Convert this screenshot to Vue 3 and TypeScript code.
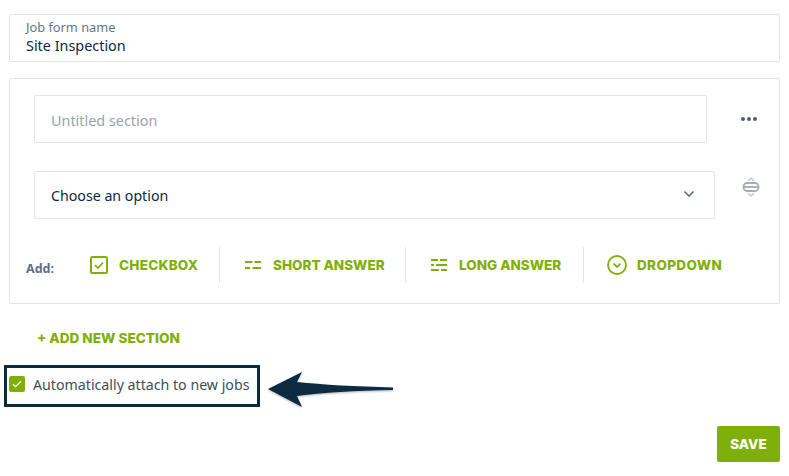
<template>
  <div class="page">
    <div class="name-box">
      <label class="name-label">Job form name</label>
      <div class="name-value">Site Inspection</div>
    </div>

    <section class="section-box">
      <div class="title-row">
        <div class="field title-field"><span>Untitled section</span></div>
        <span class="dots"><i></i><i></i><i></i></span>
      </div>

      <div class="select-row">
        <div class="field select-field">
          <span>Choose an option</span>
          <svg class="chevron" width="12" height="8" viewBox="0 0 12 8">
            <path d="M1.5 1.5 6 6l4.5-4.5" fill="none" stroke="#5d7183" stroke-width="1.6" />
          </svg>
        </div>
        <svg class="reorder" width="18" height="20" viewBox="0 0 18 20">
          <path d="M6 4 9 1l3 3M6 16l3 3 3-3" fill="none" stroke="#c3cad0" stroke-width="1.5" />
          <rect x="1.5" y="6" width="15" height="8" rx="3.5" fill="none" stroke="#a4adb5" stroke-width="1.8" />
          <path d="M2 10h14" fill="none" stroke="#a4adb5" stroke-width="1.8" />
        </svg>
      </div>

      <div class="add-row">
        <span class="add-label">Add:</span>
        <div v-for="item in addItems" :key="item.label" class="add-item" :class="item.cls">
          <svg v-if="item.icon === 'check'" width="18" height="18" viewBox="0 0 18 18">
            <rect x="1" y="1" width="16" height="16" rx="1.5" fill="none" stroke="#7fb00a" stroke-width="2" />
            <path d="M5 9.2 7.9 12 13 6.6" fill="none" stroke="#7fb00a" stroke-width="1.6" />
          </svg>
          <svg v-else-if="item.icon === 'short'" width="16" height="8" viewBox="0 0 16 8">
            <path d="M0 1h7.5M9.5 1H16M0 7h5M7.5 7H16" fill="none" stroke="#7fb00a" stroke-width="2" />
          </svg>
          <svg v-else-if="item.icon === 'long'" width="16" height="12" viewBox="0 0 16 12">
            <path d="M0 1h7M9 1h7M0 6h3M5 6h11M0 11h8M10 11h6" fill="none" stroke="#7fb00a" stroke-width="2" />
          </svg>
          <svg v-else width="20" height="20" viewBox="0 0 20 20">
            <circle cx="10" cy="10" r="9" fill="none" stroke="#7fb00a" stroke-width="1.8" />
            <path d="M6.6 8.6 10 12l3.4-3.4" fill="none" stroke="#7fb00a" stroke-width="1.8" />
          </svg>
          <span>{{ item.label }}</span>
        </div>
      </div>
    </section>

    <div class="add-section">+ ADD NEW SECTION</div>

    <div class="attach-row">
      <div class="attach-box">
        <span class="tick">
          <svg width="10" height="8" viewBox="0 0 10 8">
            <path d="M1 4.2 3.6 6.6 9 1.2" fill="none" stroke="#fff" stroke-width="1.2" />
          </svg>
        </span>
        <span class="attach-text">Automatically attach to new jobs</span>
      </div>
      <svg class="arrow" width="130" height="46" viewBox="0 0 130 46">
        <defs>
          <filter id="arrow-shadow" x="-10%" y="-20%" width="120%" height="150%">
            <feDropShadow dx="0" dy="1" stdDeviation="1.2" flood-color="#000" flood-opacity="0.3" />
          </filter>
        </defs>
        <path
          d="M3 23 37 6 32 16Q70 20 128 21.5L128 24Q70 25 32 30L37 41Z"
          fill="#0a2a3f"
          filter="url(#arrow-shadow)"
        />
      </svg>
    </div>

    <div class="footer">
      <button class="save" type="button">SAVE</button>
    </div>
  </div>
</template>

<script setup lang="ts">
interface AddItem {
  label: string;
  icon: string;
  cls: string;
}

const addItems: AddItem[] = [
  { label: "CHECKBOX", icon: "check", cls: "item-check" },
  { label: "SHORT ANSWER", icon: "short", cls: "item-short" },
  { label: "LONG ANSWER", icon: "long", cls: "item-long" },
  { label: "DROPDOWN", icon: "drop", cls: "item-drop" },
];
</script>

<style>
html,
body {
  margin: 0;
  background: #fff;
}
</style>

<style scoped>
.page {
  width: 789px;
  height: 476px;
  box-sizing: border-box;
  padding: 14px 9px 0;
  font-family: "Noto Sans", "Open Sans", sans-serif;
  color: #0a2a3f;
  overflow: hidden;
}

.name-box {
  height: 48px;
  box-sizing: border-box;
  border: 1px solid #e3e5e7;
  border-radius: 2px;
  padding: 3px 16px;
}

.name-label {
  display: block;
  font-size: 12.8px;
  line-height: 19px;
  color: #64748a;
}

.name-value {
  font-size: 14.4px;
  line-height: 18px;
}

.section-box {
  margin-top: 16px;
  height: 226px;
  box-sizing: border-box;
  border: 1px solid #e3e5e7;
  border-radius: 2px;
  padding: 16px 0 0 24px;
}

.field {
  height: 48px;
  box-sizing: border-box;
  border: 1px solid #e3e5e7;
  border-radius: 2px;
  padding: 0 16px;
  display: flex;
  align-items: center;
  font-size: 14.2px;
}

.title-row,
.select-row {
  display: flex;
  align-items: center;
}

.title-field {
  width: 673px;
  color: #98a4ae;
  padding-top: 2px;
  font-size: 14.4px;
}

.dots {
  display: flex;
  gap: 2px;
  margin-left: 34px;
}

.dots i {
  width: 4px;
  height: 4px;
  border-radius: 50%;
  background: #4f5f6e;
}

.select-row {
  margin-top: 28px;
}

.select-field {
  width: 681px;
  justify-content: space-between;
  padding-right: 19px;
}

.chevron {
  margin-bottom: 2px;
}

.reorder {
  margin: 0 0 16px 27px;
}

.add-row {
  display: flex;
  align-items: center;
  margin: 28px 0 0 -8px;
  height: 36px;
}

.add-label {
  width: 47px;
  font-size: 12.5px;
  font-weight: 700;
  color: #5d7183;
  padding-top: 6px;
}

.add-item {
  display: flex;
  align-items: center;
  height: 36px;
  box-sizing: border-box;
  color: #7fb00a;
  font-family: Inter, "Noto Sans", sans-serif;
  font-size: 13.5px;
  font-weight: 800;
}

.add-item + .add-item {
  border-left: 1px solid #e3e5e7;
}

.item-check {
  width: 146px;
  padding-left: 17px;
  gap: 11px;
  letter-spacing: 0.25px;
}

.item-short {
  width: 186px;
  padding-left: 25px;
  gap: 12px;
}

.item-long {
  width: 178px;
  padding-left: 25px;
  gap: 12px;
}

.item-drop {
  padding-left: 23px;
  gap: 10px;
  letter-spacing: 0.35px;
}

.add-section {
  margin: 26px 0 0 28px;
  font-family: Inter, "Noto Sans", sans-serif;
  font-size: 13.6px;
  font-weight: 800;
  line-height: 16px;
  color: #7fb00a;
}

.attach-row {
  position: relative;
  margin: 19px 0 0 -5px;
}

.attach-box {
  width: 256px;
  height: 42px;
  box-sizing: border-box;
  border: 3px solid #0a2a3f;
  display: flex;
  align-items: center;
  padding: 0 0 5px 2px;
  gap: 8px;
}

.tick {
  width: 16px;
  height: 16px;
  border-radius: 2px;
  background: #7fb00a;
  display: flex;
  align-items: center;
  justify-content: center;
}

.attach-text {
  font-size: 14.2px;
  line-height: 20px;
  padding-top: 2px;
  color: #3d4d5c;
  white-space: nowrap;
}

.arrow {
  position: absolute;
  left: 261px;
  top: 1px;
}

.footer {
  display: flex;
  justify-content: flex-end;
  margin-top: 19px;
}

.save {
  width: 63px;
  height: 36px;
  border: 0;
  border-radius: 2px;
  background: #7fb00a;
  color: #fff;
  font-family: Inter, "Noto Sans", sans-serif;
  font-size: 13.5px;
  font-weight: 800;
  padding: 0;
}
</style>
